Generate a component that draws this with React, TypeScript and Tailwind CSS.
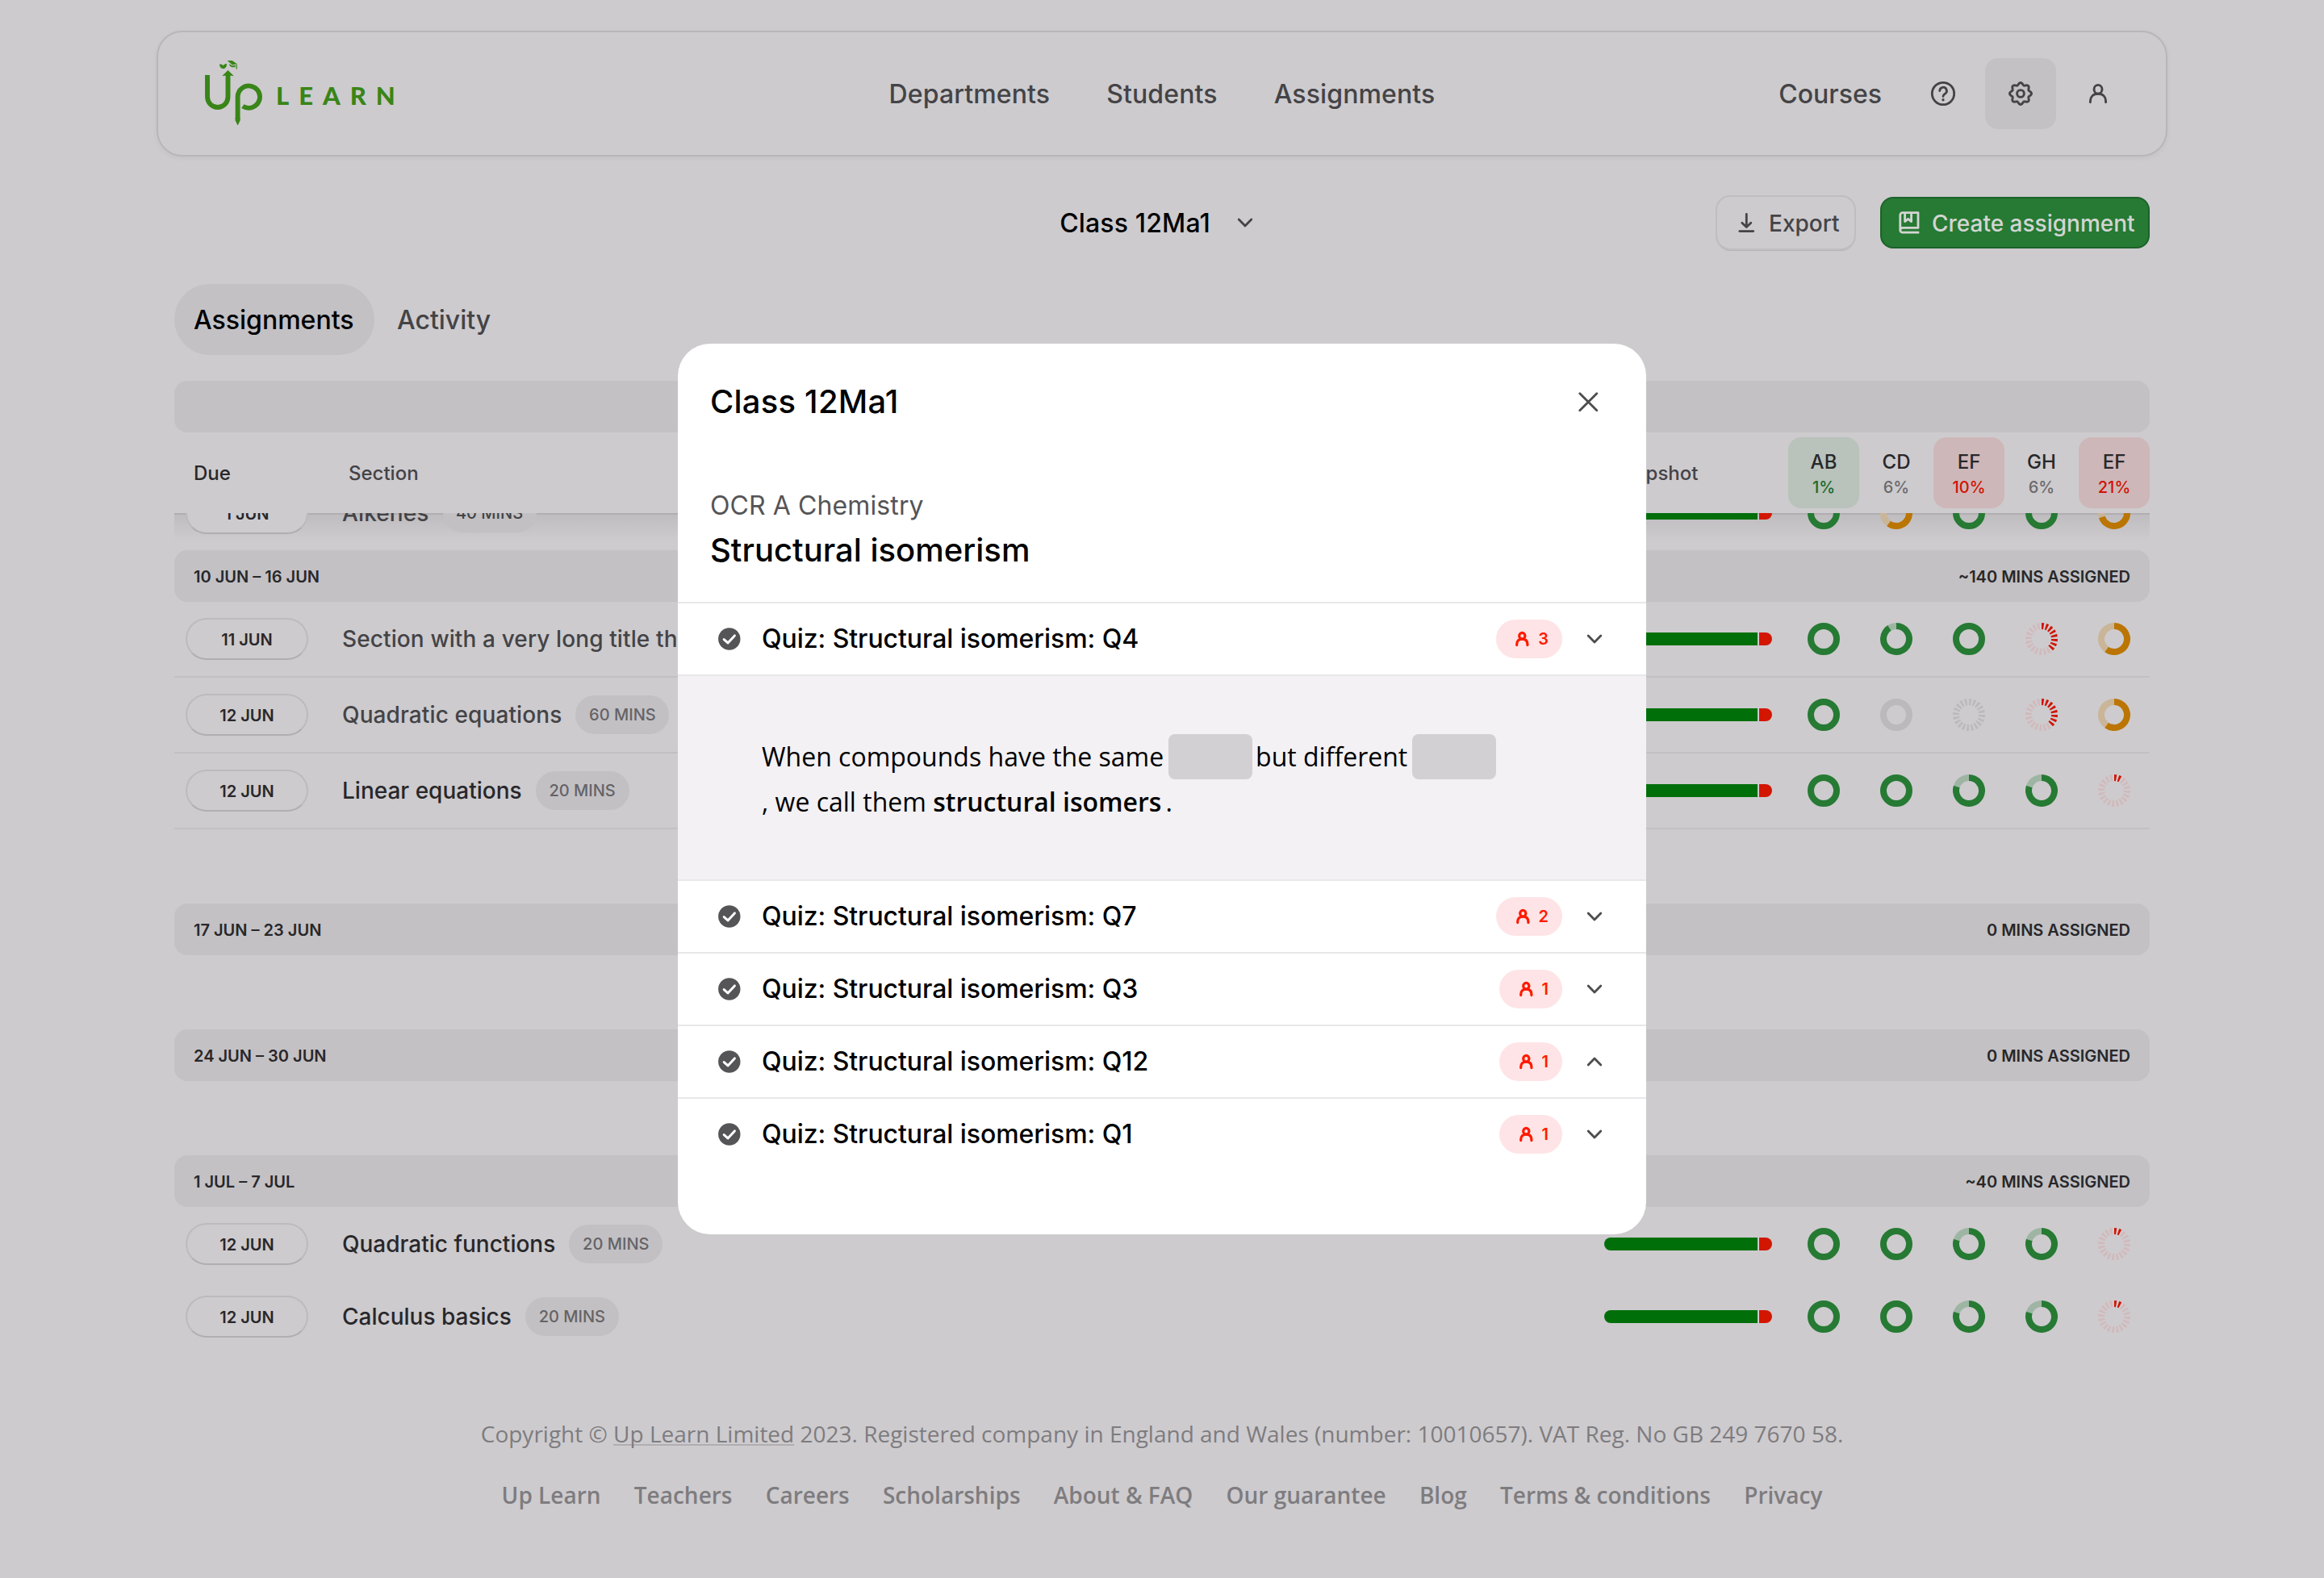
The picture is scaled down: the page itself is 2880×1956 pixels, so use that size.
import type { ReactNode } from "react";

/* ---------- icons ---------- */

function PersonIcon({ className }: { className?: string }) {
  return (
    <svg viewBox="0 0 32 32" className={className} fill="none" stroke="currentColor" strokeWidth="2.9" strokeLinecap="round">
      <ellipse cx="16" cy="10.8" rx="5" ry="5.4" />
      <path d="M6.4 26.8V25.4C6.4 20.2 9.6 16.3 16 16.3S25.6 20.2 25.6 25.4V26.8" />
    </svg>
  );
}

function BadgePersonIcon() {
  return (
    <svg viewBox="0 0 24 24" className="size-6" fill="none" stroke="currentColor" strokeWidth="3.2" strokeLinecap="round">
      <ellipse cx="12.3" cy="8.2" rx="3.6" ry="3.8" />
      <path d="M5.7 19.6V18.6C5.7 14.8 7.9 12.1 12.3 12.1S18.9 14.8 18.9 18.6V19.6" />
    </svg>
  );
}

function HelpIcon() {
  return (
    <svg viewBox="0 0 32 32" className="size-8" fill="none" stroke="currentColor" strokeWidth="2.8" strokeLinecap="round">
      <circle cx="16" cy="16" r="13.7" />
      <path d="M11.8 12.6A4.3 4.3 0 1 1 18.3 16.2C16.8 17.1 16 18 16 19.6" />
      <circle cx="16" cy="23.8" r="1.7" fill="currentColor" stroke="none" />
    </svg>
  );
}

const gearPath =
  Array.from({ length: 144 }, (_, i) => {
    const a = (i / 144) * Math.PI * 2;
    const r = 10.7 + 2.8 * Math.pow((1 + Math.cos(8 * a)) / 2, 0.9);
    return `${i === 0 ? "M" : "L"}${(16 + r * Math.sin(a)).toFixed(2)} ${(16 - r * Math.cos(a)).toFixed(2)}`;
  }).join("") + "Z";

function GearIcon() {
  return (
    <svg viewBox="0 0 32 32" className="size-8" fill="none" stroke="currentColor" strokeWidth="2.9" strokeLinejoin="round">
      <path d={gearPath} />
      <circle cx="16" cy="16" r="4.4" />
    </svg>
  );
}

function ChevronIcon({ up = false }: { up?: boolean }) {
  return (
    <svg viewBox="0 0 32 32" className="size-8" fill="none" stroke="currentColor" strokeWidth="2.8" strokeLinecap="round" strokeLinejoin="round">
      <path d={up ? "M8.2 20L16 12L23.8 20" : "M8.2 12L16 20L23.8 12"} />
    </svg>
  );
}

function DownloadIcon() {
  return (
    <svg viewBox="0 0 32 32" className="size-8" fill="none" stroke="currentColor" strokeWidth="2.8" strokeLinecap="round" strokeLinejoin="round">
      <path d="M16.3 5.4V21M10.8 16.2L16.3 21.6L21.8 16.2M7.8 26.6H24.8" />
    </svg>
  );
}

function BookIcon() {
  return (
    <svg viewBox="0 0 32 32" className="size-8" fill="none" stroke="currentColor" strokeWidth="2.8" strokeLinejoin="round">
      <path d="M28.3 28.2H7.8A3 3 0 0 1 4.8 25.2V6.5A2.9 2.9 0 0 1 7.7 3.6H27V22.4H7.8A2.9 2.9 0 0 0 4.8 25.2" />
      <path d="M10.6 4V14.6L14.6 11.4L18.6 14.6V4" />
    </svg>
  );
}

function CloseIcon() {
  return (
    <svg viewBox="0 0 32 32" className="size-8" fill="none" stroke="currentColor" strokeWidth="2.8" strokeLinecap="round">
      <path d="M5.8 5.8L26.8 26.8M26.8 5.8L5.8 26.8" />
    </svg>
  );
}

function CheckCircleIcon() {
  return (
    <svg viewBox="0 0 28 28" className="size-7 shrink-0" fill="none">
      <circle cx="13.8" cy="14" r="13.7" fill="#555456" />
      <path d="M7.2 14.6L12 18.9L20.4 9.9" stroke="#fff" strokeWidth="3" strokeLinecap="round" strokeLinejoin="round" />
    </svg>
  );
}

function LogoMark() {
  return (
    <svg viewBox="0 0 80 86" className="h-[86px] w-20" fill="none" stroke="#388518" strokeWidth="5.9">
      <path d="M7 20V47A12.75 13 0 0 0 32.5 47V20" />
      <path d="M44.6 75V46.5A13.7 13.7 0 1 1 50.8 58.6" />
      <g fill="#388518" stroke="none">
        <path d="M32.5 14L39.8 21.2L34 20.4H31L25.2 21.2Z" />
        <path d="M41.65 73H47.55V76.5L44.9 82H44.3L41.65 76.5Z" />
        <path d="M22 6.5C24.5 6.3 26 7 26.6 8.6C27.2 7 28.6 6.2 31 6C31.2 9.2 29.8 11.8 26.8 12.2C23.6 12 22 9.8 22 6.5Z" />
        <path d="M31.6 2.2L37.6 1.9L43.8 6.2L38 7.6Z" />
        <path d="M34 6.2L38 8.6L41.6 7.8V10L37.6 10.6L34.6 8.6Z" />
        <path d="M42.6 6.4H43.6L43.9 12.4H42.5Z" />
      </g>
    </svg>
  );
}

/* ---------- progress ring ---------- */

type Tone = "green" | "amber" | "red" | "grey";
type RingData = { tone: Tone; value: number; dashed?: boolean };

const ringColors: Record<Tone, [string, string]> = {
  green: ["#267a33", "#9fb5a4"],
  amber: ["#bb7503", "#cab598"],
  red: ["#d01402", "#d2b9bb"],
  grey: ["#bbb9bc", "#bbb9bc"],
};

function sector(from: number, to: number) {
  const point = (r: number, t: number) => {
    const a = t * Math.PI * 2;
    return `${(20 + r * Math.sin(a)).toFixed(2)} ${(20 - r * Math.cos(a)).toFixed(2)}`;
  };
  const large = to - from > 0.5 ? 1 : 0;
  return `M${point(20, from)}A20 20 0 ${large} 1 ${point(20, to)}L${point(12, to)}A12 12 0 ${large} 0 ${point(12, from)}Z`;
}

function Ring({ tone, value, dashed }: RingData) {
  const [strong, soft] = ringColors[tone];
  return (
    <svg viewBox="0 0 40 40" className="size-10">
      {dashed ? (
        Array.from({ length: 20 }, (_, i) => (
          <path key={i} d={sector(i / 20, i / 20 + 0.026)} fill={i / 20 < value - 0.001 ? strong : soft} />
        ))
      ) : value >= 1 || value <= 0 ? (
        <circle cx="20" cy="20" r="16" fill="none" strokeWidth="8" stroke={value >= 1 ? strong : soft} />
      ) : (
        <>
          <path d={sector(value, 1)} fill={soft} />
          <path d={sector(0, value)} fill={strong} />
        </>
      )}
    </svg>
  );
}

/* ---------- table ---------- */

const full: RingData = { tone: "green", value: 1 };
const green = (value: number): RingData => ({ tone: "green", value });
const amber = (value: number): RingData => ({ tone: "amber", value });
const red = (value: number): RingData => ({ tone: "red", value, dashed: true });

type RowData = { due: string; title: string; mins?: string; muted?: boolean; minsStrong?: boolean; rings: RingData[] };

const clippedRow: RowData = {
  due: "1 JUN", title: "Alkenes", mins: "40 MINS", muted: true, minsStrong: true,
  rings: [full, amber(0.6), full, full, amber(0.7)],
};
const firstWeek: RowData[] = [
  { due: "11 JUN", title: "Section with a very long title that wraps", muted: true, rings: [full, green(0.91), full, red(0.4), amber(0.6)] },
  { due: "12 JUN", title: "Quadratic equations", mins: "60 MINS", muted: true, rings: [full, { tone: "grey", value: 0 }, { tone: "grey", value: 0, dashed: true }, red(0.4), amber(0.6)] },
  { due: "12 JUN", title: "Linear equations", mins: "20 MINS", rings: [full, full, green(0.8), green(0.8), red(0.1)] },
];
const lastWeek: RowData[] = [
  { due: "12 JUN", title: "Quadratic functions", mins: "20 MINS", rings: [full, full, green(0.8), green(0.8), red(0.1)] },
  { due: "12 JUN", title: "Calculus basics", mins: "20 MINS", rings: [full, full, green(0.8), green(0.8), red(0.1)] },
];

const students = [
  { name: "AB", pct: "1%", cell: "bg-[#b9c2bb]", text: "text-[#1b6a2b]" },
  { name: "CD", pct: "6%", cell: "", text: "text-[#6b696c]" },
  { name: "EF", pct: "10%", cell: "bg-[#ceb7b9]", text: "text-[#d01402]" },
  { name: "GH", pct: "6%", cell: "", text: "text-[#6b696c]" },
  { name: "EF", pct: "21%", cell: "bg-[#ceb7b9]", text: "text-[#d01402]" },
];

function Row({ row }: { row: RowData }) {
  return (
    <div className="grid h-full grid-cols-[208px_1fr_208px_468px] items-center">
      <div className="pl-3.5">
        <div className="flex h-[52px] w-[152px] items-center justify-center rounded-full border-2 border-[#bcbabd] border-b-[#b0aeb1] bg-[#cdcbce] pt-px text-[20px] leading-6 font-semibold text-[#28272a]">
          {row.due}
        </div>
      </div>
      <div className="flex min-w-0 items-center overflow-hidden">
        <span className={`text-[28px] leading-10 font-medium whitespace-nowrap ${row.muted ? "tracking-[0.11px] text-[#444346]" : "text-[#28272a]"}`}>{row.title}</span>
        {row.mins && (
          <span className={`ml-[17px] flex h-12 w-[116px] items-center justify-center rounded-full bg-[#c2c0c3] text-[20px] font-medium ${row.minsStrong ? "text-[#444346]" : "text-[#656366]"}`}>
            {row.mins}
          </span>
        )}
      </div>
      <div className="flex h-4 gap-0.5 overflow-hidden rounded-full">
        <div className="w-[190px] bg-[#006f0a]" />
        <div className="flex-1 bg-[#d21600]" />
      </div>
      <div className="ml-5 flex gap-0.5">
        {row.rings.map((ring, i) => (
          <div key={i} className="flex w-[88px] justify-center">
            <Ring {...ring} />
          </div>
        ))}
      </div>
    </div>
  );
}

function WeekBar({ range, total }: { range?: string; total?: string }) {
  return (
    <div className="flex h-16 items-center justify-between rounded-2xl bg-[#c3c1c4] px-6 pt-0.5 text-[20px] font-semibold text-[#28272a]">
      <span>{range}</span>
      <span>{total}</span>
    </div>
  );
}

/* ---------- modal ---------- */

function QuizRow({ title, count, open }: { title: string; count: number; open?: boolean }) {
  return (
    <div className="flex h-[90px] items-center border-t-2 border-[#e8e7e9] pr-12 pl-[50px]">
      <CheckCircleIcon />
      <span className="ml-[26px] flex-1 text-[32px] leading-10 font-medium tracking-[-0.06px] text-black">{title}</span>
      <span className="flex h-12 items-center gap-2 rounded-full bg-[#fee4e6] pr-[17px] pl-[20.5px] text-[20px] font-semibold text-[#ff1a00]">
        <BadgePersonIcon />
        {count}
      </span>
      <span className="ml-6 text-[#4d4c4e]">
        <ChevronIcon up={open} />
      </span>
    </div>
  );
}

function Blank() {
  return <span className="mr-1 ml-[6px] inline-block h-14 w-[104px] rounded-lg bg-[#d2d0d3] [vertical-align:-16px]" />;
}

function Modal() {
  return (
    <div className="absolute inset-0 flex items-center justify-center">
      <div className="w-[1200px] overflow-hidden rounded-[40px] bg-white pb-20">
        <div className="px-10 pt-12 pb-10">
          <div className="flex items-center justify-between pr-4">
            <h2 className="text-[40px] leading-[48px] font-medium tracking-[0.2px] text-black">Class 12Ma1</h2>
            <span className="text-[#4d4c4e]">
              <CloseIcon />
            </span>
          </div>
          <p className="mt-[85px] text-[32px] leading-10 tracking-[0.1px] text-[#555456]">OCR A Chemistry</p>
          <h3 className="mt-[11px] text-[40px] leading-[48px] font-medium text-black">Structural isomerism</h3>
        </div>
        <QuizRow title="Quiz: Structural isomerism: Q4" count={3} />
        <div className="h-[254px] border-t-2 border-[#e8e7e9] bg-[#f3f1f4] pt-[72px] pl-[104px] font-['Open_Sans',sans-serif] text-[32px] leading-[56px] whitespace-nowrap text-black">
          When compounds have the same
          <Blank />
          but different
          <Blank />
          <br />, we call them <b className="mr-[5px] font-semibold">structural isomers</b>.
        </div>
        <QuizRow title="Quiz: Structural isomerism: Q7" count={2} />
        <QuizRow title="Quiz: Structural isomerism: Q3" count={1} />
        <QuizRow title="Quiz: Structural isomerism: Q12" count={1} open />
        <QuizRow title="Quiz: Structural isomerism: Q1" count={1} />
      </div>
    </div>
  );
}

/* ---------- page ---------- */

function NavTile({ active, children }: { active?: boolean; children: ReactNode }) {
  return <div className={`flex size-[88px] items-center justify-center rounded-2xl ${active ? "bg-[#c3c1c4]" : ""}`}>{children}</div>;
}

const footerLinks = ["Up Learn", "Teachers", "Careers", "Scholarships", "About & FAQ", "Our guarantee", "Blog", "Terms & conditions", "Privacy"];

export default function App() {
  return (
    <div className="relative h-[1956px] w-[2880px] overflow-hidden bg-[#cdcbce] pt-[38px] font-['Inter',sans-serif]">
      <header className="mx-auto grid h-[156px] w-[2492px] grid-cols-[1fr_auto_1fr] items-center rounded-[32px] border-2 border-[#b8b6b9] px-10 text-[32px] font-medium text-[#444346] shadow-[0_2px_6px_rgba(0,0,0,0.05)]">
        <div className="flex items-center pl-[14px]">
          <LogoMark />
          <span className="ml-[12px] pt-[4px] font-['Lato',sans-serif] text-[31px] leading-8 font-black tracking-[12px] text-[#388518]">LEARN</span>
        </div>
        <nav className="flex gap-[70px] pt-0.5 tracking-[0.12px]">
          <span>Departments</span>
          <span>Students</span>
          <span>Assignments</span>
        </nav>
        <div className="flex items-center justify-end gap-2">
          <span className="mr-6 pt-0.5">Courses</span>
          <NavTile>
            <HelpIcon />
          </NavTile>
          <NavTile active>
            <GearIcon />
          </NavTile>
          <NavTile>
            <PersonIcon className="size-8" />
          </NavTile>
        </div>
      </header>

      <main className="mx-auto w-[2448px]">
        <div className="mt-[50px] grid h-16 grid-cols-[1fr_auto_1fr] items-center">
          <div />
          <div className="flex items-center pr-2">
            <h1 className="pt-0.5 text-[32px] leading-10 font-medium tracking-[0.15px] text-black">Class 12Ma1</h1>
            <span className="ml-[27px] text-[#444346]">
              <ChevronIcon />
            </span>
          </div>
          <div className="flex justify-end gap-8">
            <button className="flex h-16 w-[170px] items-center gap-[12px] rounded-2xl pl-5 text-[28px] font-medium text-[#444346] shadow-[0_0_0_2px_#bfbdc0,0_3px_1px_#b6b4b7]">
              <DownloadIcon />
              <span className="pt-0.5">Export</span>
            </button>
            <button className="flex h-16 w-[334px] items-center gap-3 rounded-2xl border-2 border-[#1b632a] bg-[#267a33] pl-[18px] text-[28px] font-medium whitespace-nowrap text-[#d3d5d3]">
              <BookIcon />
              <span className="pt-0.5">Create assignment</span>
            </button>
          </div>
        </div>

        <div className="mt-11 flex h-[88px] items-center text-[32px] font-medium">
          <span className="flex h-full w-[248px] items-center rounded-full bg-[#c3c1c4] pt-0.5 pl-6 text-black">Assignments</span>
          <span className="ml-7 pt-0.5 text-[#444346]">Activity</span>
        </div>

        <section className="mt-8">
          <WeekBar />
          <div className="grid h-[100px] grid-cols-[208px_1fr_208px_468px] items-center text-[24px] font-medium text-[#444346]">
            <span className="pt-0.5 pl-6 text-[#28272a]">Due</span>
            <span className="pt-0.5 pl-2">Section</span>
            <span className="pt-0.5 pl-2">Snapshot</span>
            <span className="ml-5 flex gap-0.5">
              {students.map((s, i) => (
                <span key={i} className={`flex size-[88px] flex-col items-center rounded-2xl pt-[15px] ${s.cell}`}>
                  <span className="text-[24px] leading-8 text-[#28272a]">{s.name}</span>
                  <span className={`text-[20px] leading-[31px] ${s.text}`}>{s.pct}</span>
                </span>
              ))}
            </span>
          </div>

          <div className="flex h-[46px] items-end overflow-hidden bg-gradient-to-b from-[#bebcbf] to-[#cdcbce] to-75% shadow-[inset_0_2px_0_#b0aeb1]">
            <div className="h-[92px] w-full">
              <Row row={clippedRow} />
            </div>
          </div>

          <WeekBar range="10 JUN – 16 JUN" total="~140 MINS ASSIGNED" />
          {firstWeek.map((row) => (
            <div key={row.title} className="h-[94px] border-b-2 border-[#c2c0c3]">
              <Row row={row} />
            </div>
          ))}

          <div className="mt-[92px] flex flex-col gap-[92px]">
            <WeekBar range="17 JUN – 23 JUN" total="0 MINS ASSIGNED" />
            <WeekBar range="24 JUN – 30 JUN" total="0 MINS ASSIGNED" />
            <WeekBar range="1 JUL – 7 JUL" total="~40 MINS ASSIGNED" />
          </div>
          <div className="mt-px">
            {lastWeek.map((row) => (
              <div key={row.title} className="h-[90px]">
                <Row row={row} />
              </div>
            ))}
          </div>
        </section>
      </main>

      <footer className="mt-20 text-center font-['Open_Sans',sans-serif] text-[28px] leading-10 text-[#7e7c7f]">
        <p>
          Copyright ©{" "}
          <span className="underline decoration-[#b0aeb1] decoration-2 underline-offset-2 [text-decoration-skip-ink:none]">Up Learn Limited</span> 2023.
          Registered company in England and Wales (number: 10010657). VAT Reg. No GB 249 7670 58.
        </p>
        <div className="mt-9 flex justify-center gap-[41.2px] font-semibold">
          {footerLinks.map((label) => (
            <span key={label}>{label}</span>
          ))}
        </div>
      </footer>

      <Modal />
    </div>
  );
}
